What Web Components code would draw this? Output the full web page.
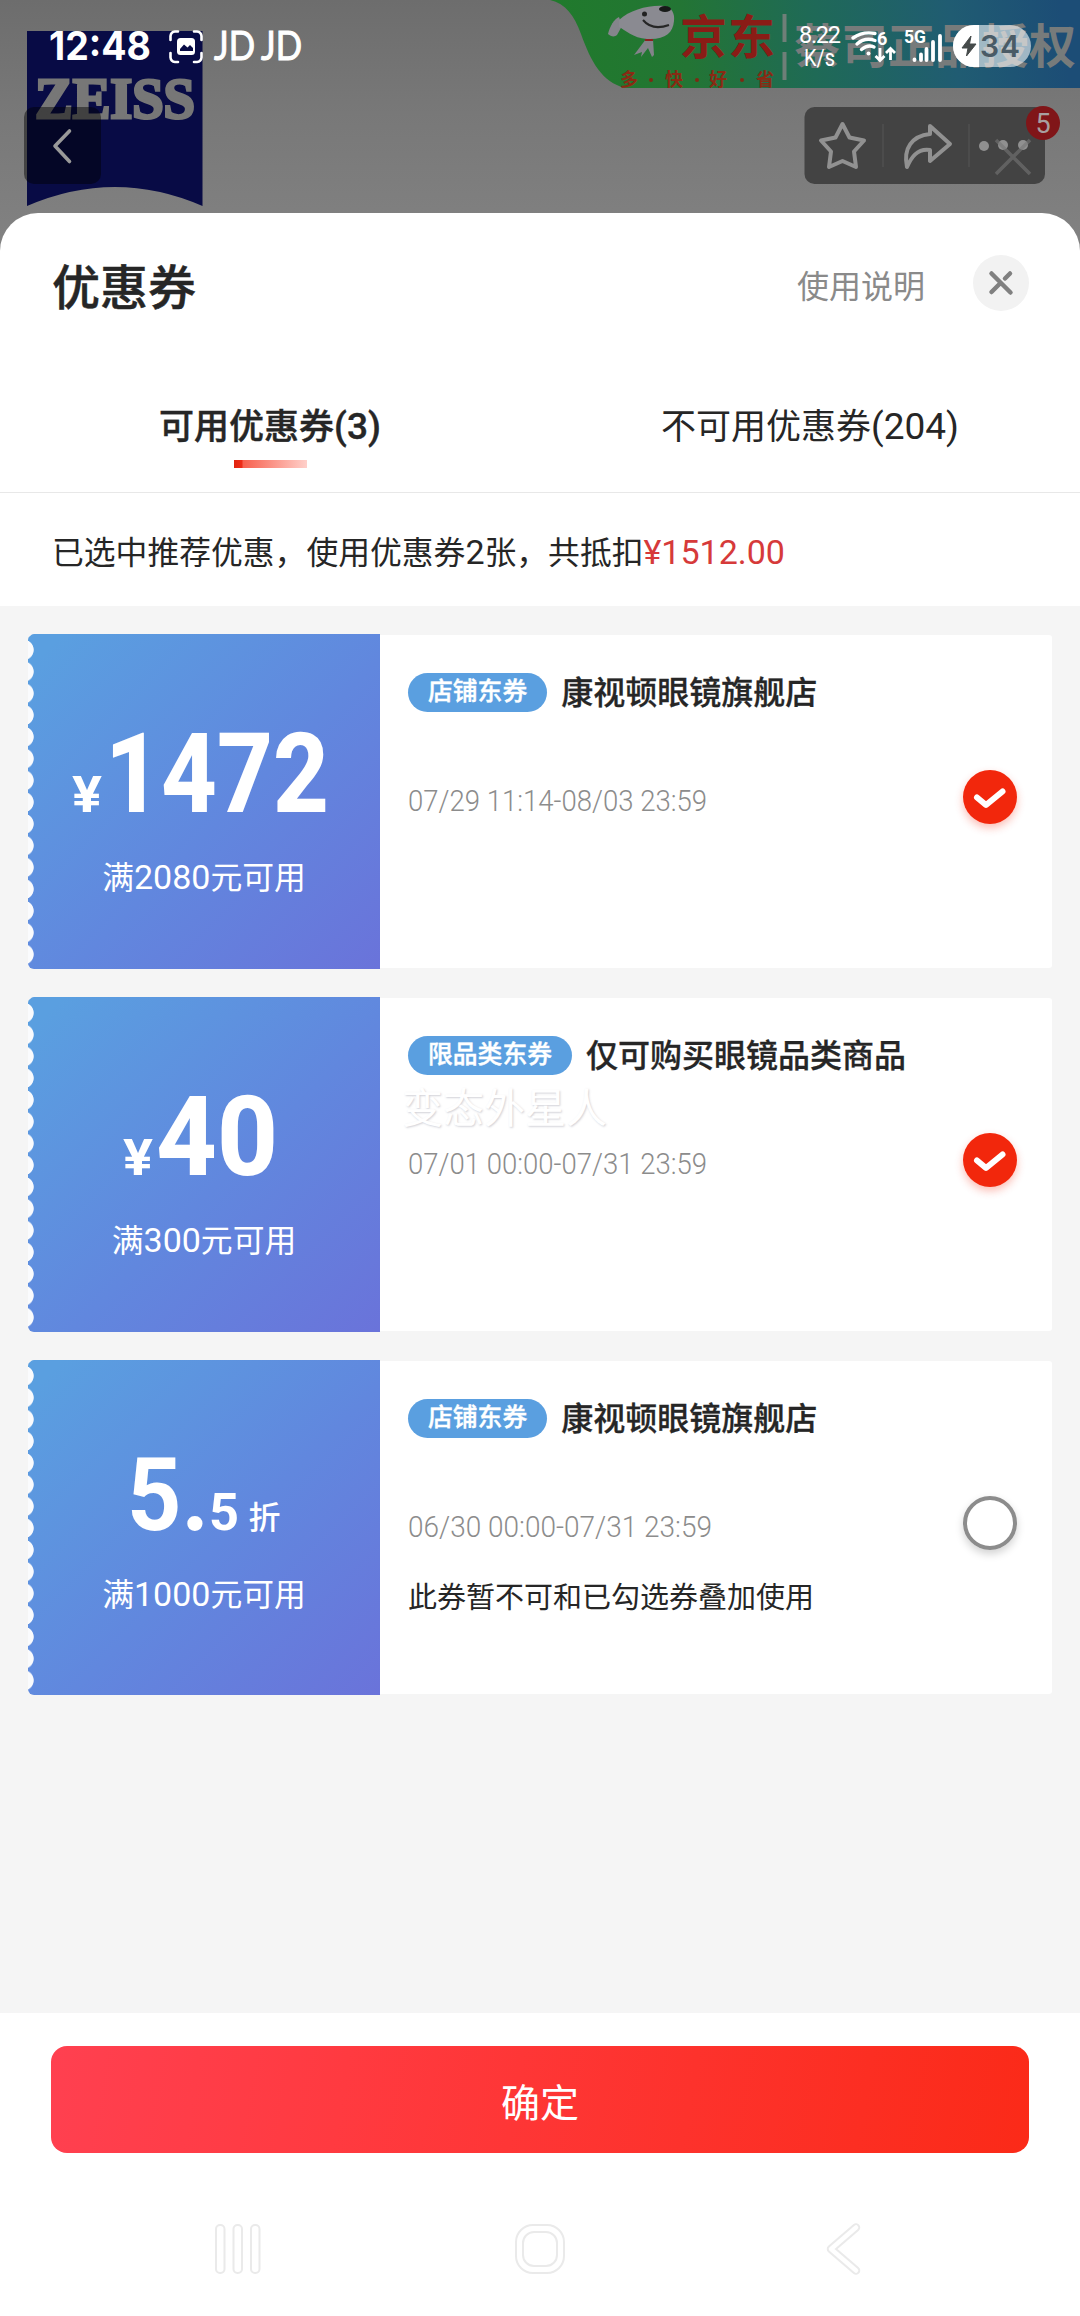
<!DOCTYPE html>
<html lang="zh-CN">
<head>
<meta charset="utf-8">
<title>优惠券</title>
<style>
  body {
    margin: 0;
    width: 1080px;
    height: 2316px;
    overflow: hidden;
    background: #808080;
    color: #262626;
    font-family: Roboto, "Noto Sans CJK SC", sans-serif;
  }
</style>
</head>
<body>
<coupon-page></coupon-page>

<script>
/**
 * Creates a template element from a string.
 *
 * @param {string} html - the markup.
 * @returns {HTMLTemplateElement} the template.
 */
const makeTemplate = (html) => {
  const template = document.createElement('template')
  template.innerHTML = html
  return template
}

/**
 * Base class that clones the template of the element into its shadow root.
 */
class BaseElement extends HTMLElement {
  constructor () {
    super()
    this.attachShadow({ mode: 'open' })
      .appendChild(this.constructor.template.content.cloneNode(true))
  }
}

/**
 * One line of text squeezed to a given width, for the narrow digits.
 */
customElements.define('fit-text', class extends BaseElement {
  static template = makeTemplate(`
    <style>
      :host { display: block; line-height: 0; }
      svg { display: block; overflow: visible; }
    </style>
    <svg><text x="0" fill="currentColor" lengthAdjust="spacingAndGlyphs"></text></svg>
  `)

  connectedCallback () {
    const width = Number(this.getAttribute('width'))
    const size = Number(this.getAttribute('size'))
    const height = Math.round(size * 0.711)
    const svg = this.shadowRoot.querySelector('svg')
    const text = this.shadowRoot.querySelector('text')
    svg.setAttribute('width', width)
    svg.setAttribute('height', height)
    text.setAttribute('y', height)
    text.setAttribute('font-size', size)
    text.setAttribute('font-weight', this.getAttribute('weight') || 400)
    text.setAttribute('textLength', width)
    text.textContent = this.getAttribute('text')
  }
})

customElements.define('shop-banner', class extends BaseElement {
  static template = makeTemplate(`
    <style>
      :host { display: block; }
      svg { display: block; }
    </style>
    <svg width="1080" height="250" viewBox="0 0 1080 250">
      <defs>
        <linearGradient id="sky" x1="0" y1="0" x2="0" y2="1">
          <stop offset="0" stop-color="#6d6d6d"/>
          <stop offset="0.45" stop-color="#787878"/>
          <stop offset="1" stop-color="#828282"/>
        </linearGradient>
        <linearGradient id="strip" gradientUnits="userSpaceOnUse" x1="560" y1="60" x2="1060" y2="0">
          <stop offset="0" stop-color="#207a2c"/>
          <stop offset="0.25" stop-color="#237534"/>
          <stop offset="0.5" stop-color="#1f6a56"/>
          <stop offset="0.78" stop-color="#205c72"/>
          <stop offset="1" stop-color="#1c4d76"/>
        </linearGradient>
      </defs>
      <rect width="1080" height="250" fill="url(#sky)"/>

      <path d="M27 31H202.500V206Q115 168 27 206Z" fill="#080b45"/>
      <text x="35" y="118" font-family="Liberation Serif, serif" font-weight="700" font-size="57" stroke="#777" stroke-width="3" fill="#777" textLength="160" lengthAdjust="spacingAndGlyphs">ZEISS</text>

      <path d="M550 0C566 4 574 15 581 34C591 62 602 82 625 88H1080V0Z" fill="url(#strip)"/>
      <!-- dog -->
      <path d="M619 17C614 19 610 26 608 34C611 37 615 37 617 35L622 26Z" fill="#85858c"/>
      <path d="M619 20C630 10 648 5 664 6C672 7 675 14 674 21C673 33 665 40 647 39C633 38 625 30 619 27Z" fill="#8a8a91"/>
      <path d="M646 39L634 55L642 52L641 57L648 48L652 57L654 55L653 39Z" fill="#83838a"/>
      <circle cx="644.500" cy="14" r="2.500" fill="#222"/>
      <ellipse cx="665" cy="9" rx="6" ry="3" fill="#171a18"/>
      <path d="M643 20Q652 31 669 25" fill="none" stroke="#262626" stroke-width="2"/>
      <path d="M645 40H653" stroke="#8d2020" stroke-width="2"/>
      <g font-family="Noto Sans CJK SC, sans-serif" font-weight="700">
        <text x="680" y="54" font-size="47" fill="#8a1c16" textLength="95">京东</text>
        <text x="620" y="86" font-size="18" fill="#8a2a14">多</text>
        <text x="665" y="86" font-size="18" fill="#8a2a14">快</text>
        <text x="709" y="86" font-size="18" fill="#8a2a14">好</text>
        <text x="756" y="86" font-size="18" fill="#8a2a14">省</text>
        <text x="794" y="63" font-size="47" fill="#777b7b" textLength="282">蔡司正品授权</text>
      </g>
      <g fill="#7c2a14"><circle cx="651" cy="80" r="2"/><circle cx="697" cy="80" r="2"/><circle cx="742" cy="80" r="2"/></g>
      <path d="M784.500 14V42M784.500 52V80" stroke="#6f7f78" stroke-width="4"/>

      <!-- back -->
      <rect x="24" y="107" width="77" height="77" rx="10" fill="#000" fill-opacity="0.45"/>
      <path d="M69.500 131L55 146L69.500 161.500" fill="none" stroke="#999" stroke-width="3.600" stroke-linecap="round" stroke-linejoin="round"/>

      <!-- star, share, more -->
      <rect x="804.500" y="107" width="240.500" height="77" rx="10" fill="#434343"/>
      <path d="M883 124V167M969 124V167" stroke="#505050" stroke-width="1.500"/>
      <g fill="none" stroke="#919191" stroke-width="4" stroke-linejoin="round" stroke-linecap="round">
        <path d="M842.500 124L849.500 137.500L864 140.500L854 151.500L856 167L842.500 161L829 167L831 151.500L821 140.500L835.500 137.500Z"/>
        <path d="M930 126L950 144L930 161V150C917 148 911 158 907 167C903 148 912 136 930 134Z"/>
      </g>
      <g fill="#909090"><circle cx="984" cy="146" r="5"/><circle cx="1003" cy="145" r="5"/><circle cx="1023" cy="145" r="5"/></g>
      <path d="M996 140L1030 174M1030 140L996 174" stroke="#777" stroke-opacity="0.600" stroke-width="3.500"/>
      <circle cx="1043" cy="123" r="17" fill="#801518"/>
      <text x="1043" y="132.500" text-anchor="middle" font-size="27" fill="#a8a0a0">5</text>

      <!-- status bar -->
      <g fill="#fff">
        <text x="49" y="60" font-family="Inter, Roboto, sans-serif" font-weight="700" font-size="39" textLength="102" lengthAdjust="spacingAndGlyphs">12:48</text>
        <path d="M178 31.500H175A5 5 0 0 0 170.500 36V40M194 31.500H197A5 5 0 0 1 201.500 36V40M178 62H175A5 5 0 0 1 170.500 57.500V53M194 62H197A5 5 0 0 0 201.500 57.500V53" fill="none" stroke="#fff" stroke-width="2.600" stroke-linecap="round"/>
        <rect x="177" y="38" width="18" height="17" rx="3.500"/>
        <path d="M180 51V49L184 44.500L187.500 47.500L190 45L193 48V51Z" fill="#080b45"/>
        <g font-family="Lato, sans-serif" font-weight="400" font-size="40" stroke="#fff" stroke-width="1">
          <text x="214" y="60" textLength="41" lengthAdjust="spacingAndGlyphs">JD</text>
          <text x="261" y="60" textLength="41" lengthAdjust="spacingAndGlyphs">JD</text>
        </g>
        <text x="799" y="43" font-size="23.500" textLength="42">8.22</text>
        <text x="804" y="65.500" font-size="23.500" textLength="31" lengthAdjust="spacingAndGlyphs">K/s</text>
        <g fill="none" stroke="#fff" stroke-width="3.400" stroke-linecap="round">
          <path d="M853 38Q863 31 875 33.500"/>
          <path d="M857 44Q865 37 875 40.500"/>
          <path d="M861.500 49.500Q868 44 874 47"/>
        </g>
        <circle cx="868.500" cy="53.500" r="2"/>
        <text x="877" y="44.500" font-size="18" font-weight="700">6</text>
        <path d="M880 48V60M875.500 56L880 60.500L884.500 56M890.500 60V49M886 53L890.500 48.500L895 53" fill="none" stroke="#fff" stroke-width="2.800"/>
        <text x="904" y="43" font-size="18" font-weight="700" textLength="22" lengthAdjust="spacingAndGlyphs">5G</text>
        <g stroke="#fff" stroke-width="3.800" stroke-linecap="round">
          <path d="M914.500 59.500V60M921 54.500V60M926.500 49V60M933 42V60M940 36V60"/>
        </g>
        <rect x="953" y="25" width="78" height="42" rx="21" fill-opacity="0.580"/>
        <path d="M979 25H974A21 21 0 0 0 974 67H979Z"/>
        <path d="M971 36L962 48H968L966.500 56L976 44H969.500Z" fill="#454a4a" stroke="#454a4a"/>
        <text x="980" y="56.500" font-family="Inter, Roboto, sans-serif" font-size="30" font-weight="600" fill="#4a5b66" textLength="40">34</text>
      </g>
    </svg>
  `)
})

customElements.define('sheet-header', class extends BaseElement {
  static template = makeTemplate(`
    <style>
      :host {
        display: flex;
        align-items: center;
        height: 140px;
        padding: 0 51px 0 52px;
      }
      .title { flex: 1; font-size: 48px; font-weight: 500; padding-top: 1px; -webkit-text-stroke: 0.5px; }
      .help { font-size: 32px; color: #8a8a8a; margin-right: 48px; padding-top: 1px; }
      svg { display: block; }
    </style>
    <span class="title"><slot></slot></span>
    <span class="help"><slot name="help"></slot></span>
    <svg width="56" height="56" viewBox="0 0 56 56">
      <circle cx="28" cy="28" r="28" fill="#f2f2f2"/>
      <path d="M18.500 18.500L37.500 37.500M37 18.500L32 23.500M26 29.500L18.500 37" stroke="#808080" stroke-width="4.500" stroke-linecap="round"/>
    </svg>
  `)
})

customElements.define('coupon-tab', class extends BaseElement {
  static template = makeTemplate(`
    <style>
      :host {
        flex: 1;
        display: flex;
        flex-direction: column;
        align-items: center;
        font-size: 35px;
        line-height: 52px;
        padding-top: 48px;
      }
      :host([selected]) { font-weight: 500; -webkit-text-stroke: 0.4px; }
      .count { font-size: 37px; }
      i { display: none; width: 73px; height: 8px; margin-top: 6px; background: linear-gradient(90deg, #e0240f 0, #ee2c18 8px, #f7604e 9px, #ffd0ca 100%); }
      :host([selected]) i { display: block; }
    </style>
    <span><slot></slot><span class="count"><slot name="count"></slot></span></span>
    <i></i>
  `)
})

customElements.define('coupon-amount', class extends BaseElement {
  static template = makeTemplate(`
    <style>
      :host {
        display: flex;
        align-items: flex-end;
        justify-content: center;
      }
    </style>
    <slot></slot>
  `)
})

customElements.define('coupon-check', class extends BaseElement {
  static template = makeTemplate(`
    <style>
      :host {
        display: flex;
        box-sizing: border-box;
        width: 54px;
        height: 54px;
        border-radius: 50%;
        border: 4.500px solid #8c8c8c;
        box-shadow: 0 4px 8px rgba(0, 0, 0, 0.18);
      }
      :host([checked]) {
        border: 0;
        background: #f2270c;
        box-shadow: 0 4px 8px rgba(242, 39, 12, 0.3);
      }
      svg { display: none; }
      :host([checked]) svg { display: block; }
    </style>
    <svg width="54" height="54" viewBox="0 0 54 54">
      <path d="M14 27.500L23 35L39.500 21.500" fill="none" stroke="#fff" stroke-width="6" stroke-linecap="round" stroke-linejoin="round"/>
    </svg>
  `)
})

customElements.define('coupon-card', class extends BaseElement {
  static template = makeTemplate(`
    <style>
      :host {
        display: flex;
        height: 335px;
      }
      .value {
        width: 352px;
        box-sizing: border-box;
        border-radius: 6px 0 0 6px;
        color: #fff;
        display: flex;
        flex-direction: column;
        align-items: center;
        background:
          radial-gradient(circle at -4.500px 50%, #fafbfd 9.800px, transparent 10.600px) 0 5px / 12px 21.750px repeat-y,
          linear-gradient(135deg, #5a9fe0 5%, #6187de 55%, #6a73da 100%);
      }
      .amount { height: 178px; display: flex; align-items: flex-end; }
      .limit { font-size: 31.800px; line-height: 48px; margin-top: 41px; }
      :host([discount]) .amount { height: 170px; }
      :host([discount]) .limit { margin-top: 40px; }
      .info {
        flex: 1;
        display: flex;
        align-items: center;
        margin: 1px 0;
        padding: 0 35.500px 0 28px;
        background: #fff;
        border-radius: 0 3px 3px 0;
      }
      .detail { flex: 1; align-self: stretch; display: flex; flex-direction: column; }
      .name { display: flex; align-items: center; gap: 14px; margin-top: 38px; height: 39px; }
      .tag {
        height: 39px;
        line-height: 37px;
        padding: 0 20px;
        border-radius: 20px;
        background: #5a9fe0;
        color: #fff;
        font-size: 24.800px;
        font-weight: 500;
        -webkit-text-stroke: 0.4px;
      }
      .shop { font-size: 32px; font-weight: 500; line-height: 39px; padding-top: 2px; -webkit-text-stroke: 0.3px; }
      .extra { height: 78px; }
      .note { font-size: 29px; line-height: 40px; margin-top: 41px; }
      ::slotted(coupon-check) { margin-bottom: 9px; }
    </style>
    <div class="value">
      <div class="amount"><slot name="amount"></slot></div>
      <div class="limit"><slot name="limit"></slot></div>
    </div>
    <div class="info">
      <div class="detail">
        <div class="name">
          <span class="tag"><slot name="tag"></slot></span>
          <span class="shop"><slot></slot></span>
        </div>
        <div class="extra"><slot name="extra"></slot></div>
        <slot name="date"></slot>
        <div class="note"><slot name="note"></slot></div>
      </div>
      <slot name="check"></slot>
    </div>
  `)
})

customElements.define('confirm-button', class extends BaseElement {
  static template = makeTemplate(`
    <style>
      :host {
        display: flex;
        align-items: center;
        justify-content: center;
        height: 107px;
        border-radius: 16px;
        color: #fff;
        font-size: 39px;
        background: linear-gradient(100deg, #ff4050 0%, #ff3a40 30%, #fb2a18 100%);
      }
    </style>
    <span><slot></slot></span>
  `)
})

customElements.define('nav-bar', class extends BaseElement {
  static template = makeTemplate(`
    <style>
      :host { display: block; }
      svg { display: block; }
    </style>
    <svg width="1080" height="163" viewBox="0 0 1080 163" fill="none" stroke-linejoin="round">
      <g stroke="#eaeaea" stroke-width="2">
        <rect x="216" y="72" width="8.500" height="48" rx="4"/>
        <rect x="233.500" y="72" width="8.500" height="48" rx="4"/>
        <rect x="251" y="72" width="8.500" height="48" rx="4"/>
        <rect x="516" y="72" width="48" height="48" rx="17"/>
        <rect x="523" y="79" width="34" height="34" rx="11"/>
      </g>
      <path d="M856 74.500L831 96L856 117.500" stroke="#eaeaea" stroke-width="8.500" stroke-linecap="round"/>
      <path d="M856 74.500L831 96L856 117.500" stroke="#fff" stroke-width="4.500" stroke-linecap="round"/>
    </svg>
  `)
})

customElements.define('coupon-page', class extends BaseElement {
  static template = makeTemplate(`
    <style>
      :host { display: block; width: 1080px; height: 2316px; }
      shop-banner { height: 213px; overflow: visible; }
      .sheet {
        position: relative;
        height: 2103px;
        background: #fff;
        border-radius: 38px 38px 0 0;
        display: flex;
        flex-direction: column;
      }
      .tabs { display: flex; height: 139px; border-bottom: 1px solid #e8e8e8; }
      .summary { height: 113px; line-height: 118px; padding-left: 52px; font-size: 31.800px; }
      .summary b { font-weight: 400; color: #d63a3a; }
      .num { font-size: 34px; }
      .list {
        height: 1351px;
        padding: 28px;
        display: flex;
        flex-direction: column;
        gap: 28px;
        background: #f5f5f5;
      }
      .footer { padding: 33px 51px 0; }
      .date { color: #8c8c8c; }
      .money { margin-right: 8px; }
      .yen { margin-right: 3px; }
      .unit { font-size: 32px; line-height: 32px; font-weight: 500; margin: 0 0 -4px 9px; }
      .watermark {
        display: block;
        padding-top: 7px;
        margin-left: -6px;
        font-size: 41px;
        line-height: 54px;
        color: #fff;
        text-shadow: 1px 1px 2px rgba(90, 90, 110, 0.28);
      }
    </style>
    <shop-banner></shop-banner>
    <div class="sheet">
      <sheet-header>优惠券<span slot="help">使用说明</span></sheet-header>
      <div class="tabs">
        <coupon-tab selected>可用优惠券<span slot="count">(3)</span></coupon-tab>
        <coupon-tab>不可用优惠券<span slot="count">(204)</span></coupon-tab>
      </div>
      <div class="summary">已选中推荐优惠，使用优惠券<span class="num">2</span>张，共抵扣<b class="num">¥1512.00</b></div>
      <div class="list">
        <coupon-card>
          <coupon-amount class="money" slot="amount">
            <fit-text class="yen" text="¥" size="50" width="30" weight="700"></fit-text>
            <fit-text text="1472" size="111" width="224" weight="800"></fit-text>
          </coupon-amount>
          <span slot="limit">满<span class="num">2080</span>元可用</span>
          <span slot="tag">店铺东券</span>
          康视顿眼镜旗舰店
          <fit-text class="date" slot="date" text="07/29 11:14-08/03 23:59" size="29.500" width="299" weight="300"></fit-text>
          <coupon-check slot="check" checked></coupon-check>
        </coupon-card>
        <coupon-card>
          <coupon-amount class="money" slot="amount">
            <fit-text class="yen" text="¥" size="50" width="30" weight="700"></fit-text>
            <fit-text text="40" size="111" width="122" weight="800"></fit-text>
          </coupon-amount>
          <span slot="limit">满<span class="num">300</span>元可用</span>
          <span slot="tag">限品类东券</span>
          仅可购买眼镜品类商品
          <span class="watermark" slot="extra">变态外星人</span>
          <fit-text class="date" slot="date" text="07/01 00:00-07/31 23:59" size="29.500" width="299" weight="300"></fit-text>
          <coupon-check slot="check" checked></coupon-check>
        </coupon-card>
        <coupon-card discount>
          <coupon-amount slot="amount">
            <fit-text text="5." size="102" width="82" weight="700"></fit-text>
            <fit-text text="5" size="52" width="30" weight="700"></fit-text>
            <span class="unit">折</span>
          </coupon-amount>
          <span slot="limit">满<span class="num">1000</span>元可用</span>
          <span slot="tag">店铺东券</span>
          康视顿眼镜旗舰店
          <fit-text class="date" slot="date" text="06/30 00:00-07/31 23:59" size="29.500" width="304" weight="300"></fit-text>
          <span slot="note">此券暂不可和已勾选券叠加使用</span>
          <coupon-check slot="check"></coupon-check>
        </coupon-card>
      </div>
      <div class="footer">
        <confirm-button>确定</confirm-button>
      </div>
      <nav-bar></nav-bar>
    </div>
  `)
})
</script>
</body>
</html>
